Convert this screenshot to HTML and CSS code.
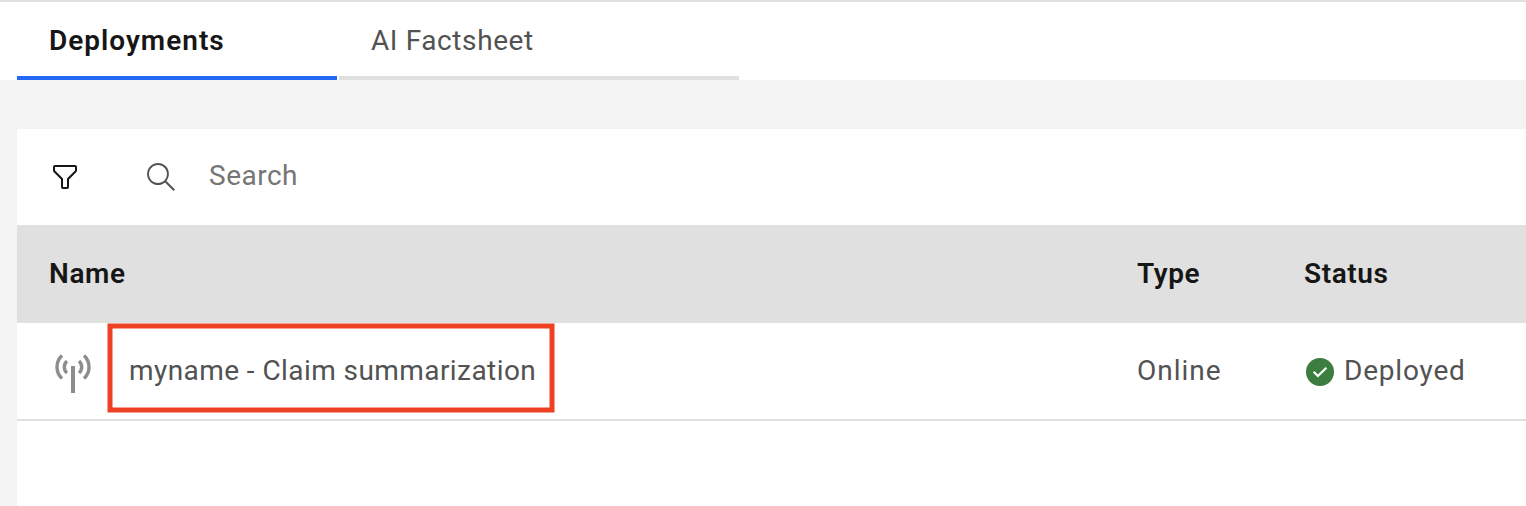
FILE: index.html
```html
<!DOCTYPE html>
<html lang="en">
<head>
<meta charset="utf-8">
<title>Deployments</title>
<link rel="stylesheet" href="styles.css">
</head>
<body>
<nav class="tabs">
  <div class="tab tab-active"><span class="t-deployments">Deployments</span></div>
  <div class="tab tab-idle"><span class="t-factsheet">AI Factsheet</span></div>
</nav>
<main class="panel">
  <div class="toolbar">
    <svg class="icon-filter" width="32" height="32" viewBox="0 0 32 32"><path d="M18,28H14a2,2,0,0,1-2-2V18.41L4.59,11A2,2,0,0,1,4,9.59V6A2,2,0,0,1,6,4H26a2,2,0,0,1,2,2V9.59A2,2,0,0,1,27.41,11L20,18.41V26A2,2,0,0,1,18,28ZM6,6V9.59l8,8V26h4V17.59l8-8V6Z"/></svg>
    <svg class="icon-search" width="32" height="32" viewBox="0 0 16 16"><path d="M15,14.3L10.7,10c1.9-2.3,1.6-5.8-0.7-7.7S4.2,0.7,2.3,3S0.7,8.8,3,10.7c2,1.7,5,1.7,7,0l4.3,4.3L15,14.3z M2,6.5C2,4,4,2,6.5,2S11,4,11,6.5S9,11,6.5,11S2,9,2,6.5z"/></svg>
    <span class="search-text">Search</span>
  </div>
  <div class="row head">
    <div><span class="t-name">Name</span></div>
    <div><span class="t-type">Type</span></div>
    <div><span class="t-status">Status</span></div>
  </div>
  <div class="row item">
    <div class="name-cell">
      <svg class="icon-antenna" width="40" height="42" viewBox="0 0 40 42"><path d="M9 5.5A15.7 15.7 0 0 0 9 28.5M31 5.5A15.7 15.7 0 0 1 31 28.5"/><path d="M14 11A8 8 0 0 0 14 23M26 11A8 8 0 0 1 26 23"/><path class="mast" d="M20 16V43"/></svg>
      <span class="t-item">myname - Claim summarization</span>
      <svg class="highlight" width="448" height="90" viewBox="0 0 448 90"><rect x="3" y="3" width="442" height="84"/></svg>
    </div>
    <div><span class="t-online">Online</span></div>
    <div class="status-cell">
      <svg class="icon-check" width="28" height="28" viewBox="0 0 28 28"><circle cx="14" cy="14" r="14"/><path d="M7.6 13.8L11.9 18L20.4 9.8"/></svg>
      <span class="t-deployed">Deployed</span>
    </div>
  </div>
</main>
</body>
</html>
```
FILE: styles.css
```css
* { box-sizing: border-box; }
body {
  margin: 0;
  height: 506px;
  overflow: hidden;
  display: flex;
  flex-direction: column;
  background: #f3f3f3;
  color: #525252;
  font: 400 28px/36px Roboto, "Noto Sans", sans-serif;
  white-space: nowrap;
}
svg { display: block; flex: none; }
.tabs {
  display: flex;
  gap: 2px;
  height: 80px;
  flex: none;
  padding-left: 17px;
  border-top: 2px solid #e0e0e0;
  background: #fff;
}
.tab { padding: 21px 0 0 32px; border-bottom: 4px solid #e0e0e0; }
.tab-active { width: 320px; border-color: #2368f5; color: #161616; font-weight: 600; }
.tab-idle { width: 400px; }
.panel { flex: 1; margin: 49px 0 0 17px; background: #fff; }
.toolbar { display: flex; align-items: center; height: 96px; padding-left: 32px; }
.icon-filter { fill: #161616; }
.icon-search { fill: #525252; margin-left: 64px; }
.search-text { margin-left: 32px; color: #757575; letter-spacing: .5px; padding-bottom: 3px; }
.row { display: grid; grid-template-columns: 1088px 167px 1fr; align-items: center; padding-left: 32px; }
.head { height: 98px; background: #e0e0e0; color: #161616; font-weight: 600; }
.item { height: 98px; border-bottom: 2px solid #e0e0e0; }
.name-cell { position: relative; display: flex; align-items: center; }
.icon-antenna { margin-left: 4px; fill: none; stroke: #8d8d8d; stroke-width: 3.4; overflow: visible; }
.icon-antenna .mast { stroke-width: 4; }
.t-item { margin-left: 36px; letter-spacing: .43px; }
.highlight { position: absolute; left: 58px; top: -27px; fill: none; stroke: #ee4023; stroke-width: 5; }
.status-cell { display: flex; align-items: center; gap: 10px; padding-left: 2px; }
.icon-check { margin-top: 2px; }
.icon-check circle { fill: #3c7d40; }
.icon-check path { fill: none; stroke: #fff; stroke-width: 2.2; }
.t-deployments { letter-spacing: 1px; }
.t-factsheet { letter-spacing: .6px; }
.t-name, .t-type, .t-status { letter-spacing: .6px; }
.t-online { letter-spacing: 1px; }
.t-deployed { letter-spacing: .8px; }
```
